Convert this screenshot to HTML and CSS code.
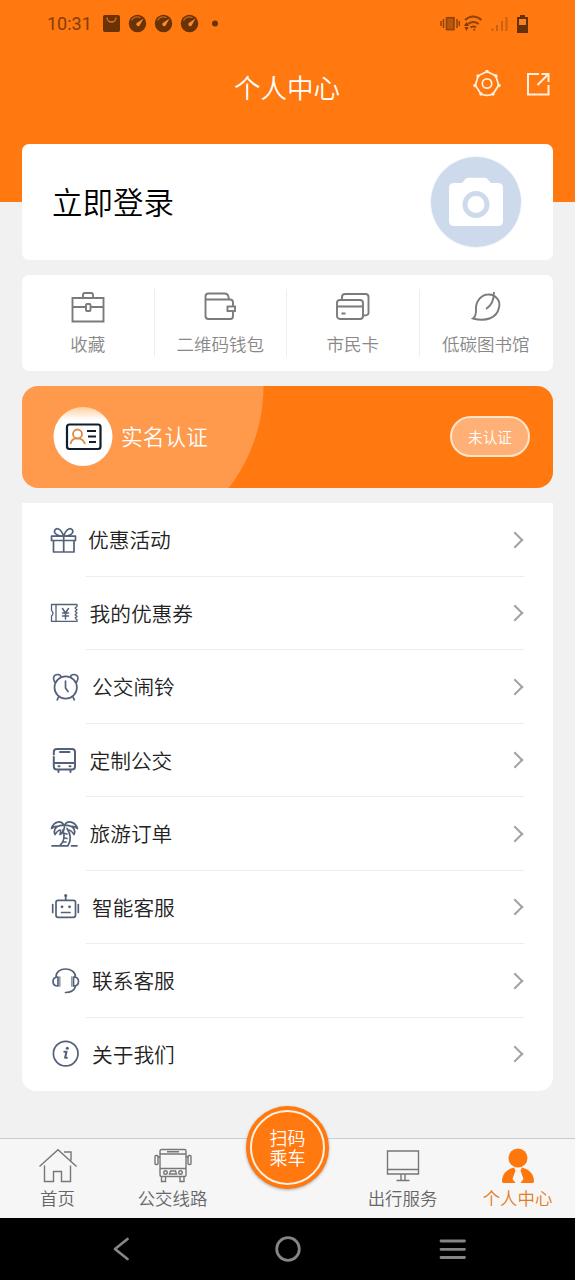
FILE: index.html
```html
<!DOCTYPE html>
<html lang="zh-CN">
<head>
<meta charset="utf-8">
<title>个人中心</title>
<link rel="stylesheet" href="styles.css">
</head>
<body>
<div class="screen">
  <header class="header">
    <div class="status">
      <span class="time">10:31</span>
      <svg class="status-apps" width="118" height="20" viewBox="0 0 118 20">
        <rect x="0" y="2" width="17" height="17" rx="2" fill="#6b3206"/>
        <path d="M4 4.500a4.500 4.500 0 0 0 9 0" fill="none" stroke="#e27420" stroke-width="1.300"/>
        <g id="gauge"><circle cx="34.500" cy="10.500" r="8.700" fill="#6b3206"/><path d="M28.500 7.500q3-5 9-3" fill="none" stroke="#c9681f" stroke-width="1.300"/><path d="M40.500 5.500l-4 7.300a2 2 0 0 1-3-2.500z" fill="#f78b38"/></g>
        <use href="#gauge" x="26"/><use href="#gauge" x="52"/>
        <circle cx="112" cy="10.500" r="3" fill="#6b3206"/>
      </svg>
      <svg class="status-system" width="90" height="22" viewBox="0 0 90 22">
        <g fill="none" stroke="#8e4308" stroke-width="1.500">
          <rect x="6.500" y="5.700" width="7.500" height="12" fill="#b8560b"/>
          <path d="M3.500 7v9M17 7v9M1 9v5M19.300 9v5"/>
          <path d="M25 8q8-7 16.500 0" stroke-width="2"/><path d="M28 12q5.300-4 10.700 0" stroke-width="2"/><path d="M30.500 15.500q3-2 5.500 0" stroke-width="1.800"/>
        </g>
        <path d="M33 17l1.200 2 1.300-2zM24 14l2.500-4 2.500 4zM24.500 15l2 4 2-4z" fill="#7c3a07"/>
        <path d="M52.500 16.500v2.500M57 13v6M62 9v10M66.500 5v14" stroke="#c86112" stroke-width="2"/>
        <path d="M80 3h5v2h3v16H77V5h3z" fill="#66300a"/><path d="M79 7h7v6h-7z" fill="#f78325"/>
      </svg>
    </div>
    <div class="title-bar">
      <h1 class="title">个人中心</h1>
      <div class="title-actions">
        <svg width="28" height="30" viewBox="0 0 28 30" fill="none" stroke="#fff0df" stroke-width="1.700"><path d="M14 2.500l8.700 4.200 3 9.500-5.500 8.500Q14 28 7.800 24.700L2.300 16.200l3-9.500z" stroke-linejoin="round"/><circle cx="14" cy="14.500" r="4.700"/><g fill="#fff0df" stroke="none"><circle cx="14" cy="2.500" r="1.700"/><circle cx="23" cy="7" r="1.700"/><circle cx="5" cy="7" r="1.700"/><circle cx="26" cy="16.500" r="1.700"/><circle cx="2" cy="16.500" r="1.700"/><circle cx="20" cy="25" r="1.700"/><circle cx="8" cy="25" r="1.700"/></g></svg>
        <svg width="24" height="24" viewBox="0 0 24 24" fill="none" stroke="#fff0df" stroke-width="2"><path d="M13 2H2v20.500h20.500V13M15.500 2h7v8M22 2.500L11.500 13"/></svg>
      </div>
    </div>
  </header>

  <main class="content">
    <section class="card login">
      <span class="login-text">立即登录</span>
      <svg width="94" height="94" viewBox="0 0 94 94"><circle cx="47" cy="47" r="46" fill="#f3f8fe"/><circle cx="47" cy="47" r="45" fill="#cddaeb"/><path d="M25 28h8l4-4.500q1-.8 2-.8h17q1 0 2 .8l4 4.500h7q5 0 5 5v33q0 5-5 5H25q-5 0-5-5V33q0-5 5-5z" fill="#fff"/><circle cx="47" cy="49.500" r="11" fill="none" stroke="#cddaeb" stroke-width="5"/></svg>
    </section>

    <section class="card tools">
      <div class="tool"><svg width="36" height="34" viewBox="0 0 36 34"><path d="M2.500 8h31v23.500h-31zM13 7.500V5q0-2 2-2h6q2 0 2 2v2.500M2.500 17H16M20 17h13.500"/><rect x="16" y="14" width="4.500" height="7" rx="1"/></svg><span>收藏</span></div>
      <div class="tool"><svg width="36" height="34" viewBox="0 0 36 34"><path d="M3.500 9V6.500q0-3 3-3h16q3.500 0 4 3.500l.5 2M3.500 8v18q0 3 3 3h22q2.500 0 2.500-3v-4M3.500 9.500H28q3 0 3 3v4"/><rect x="25.500" y="16.500" width="7.500" height="4.500"/></svg><span>二维码钱包</span></div>
      <div class="tool"><svg width="36" height="34" viewBox="0 0 36 34"><rect x="2" y="10" width="26" height="19" rx="3"/><path d="M2 16.500h26M6.500 23.500h4M7 9V7q0-3 3-3h20.500q3 0 3 3v16q0 2.500-5 2.500"/></svg><span>市民卡</span></div>
      <div class="tool"><svg width="36" height="34" viewBox="0 0 36 34"><path d="M5 28.500q3-2 3-8C7 11 14 4.500 20 4.500c7-.5 13 6 11 13C29 28 18 32 5 28.500zM26 2q0 12-8 17"/></svg><span>低碳图书馆</span></div>
    </section>

    <section class="verify">
      <svg class="badge" width="60" height="60" viewBox="0 0 60 60"><defs><linearGradient id="rim" x1="0" y1="0" x2="0" y2="1"><stop offset="0" stop-color="#ffcf9c"/><stop offset=".22" stop-color="#fff"/></linearGradient></defs><circle cx="30" cy="29.500" r="29.500" fill="url(#rim)"/><rect x="14" y="17.500" width="33.500" height="24.500" rx="2.500" fill="none" stroke="#121d29" stroke-width="2.200"/><g fill="none" stroke="#df8840" stroke-width="1.800"><circle cx="24.500" cy="27" r="4.500"/><path d="M17.500 37q1-6 7-5.700 5.500 0 7.500 5.700"/></g><path d="M34 24h9M35 29.500h8M36 35h7" stroke="#121d29" stroke-width="2"/></svg>
      <span class="verify-text">实名认证</span>
      <span class="verify-state">未认证</span>
    </section>

    <ul class="menu">
      <li class="row"><svg class="icon" viewBox="0 0 30 30"><path d="M1.500 11.200h24v4.300h-24zM3.500 15.500h20.500V27H3.500zM13.700 11v16M13.500 11C8 11 4 9 4.500 6 5.500 2 11 3 13.500 11zM13.800 11c5.500 0 9.500-2 9-5-1-4-6.500-3-9 5z"/></svg><span class="label">优惠活动</span><i class="arrow"></i></li>
      <li class="row nudge-2"><svg class="icon thin" viewBox="0 0 30 30"><path d="M1.500 6.500h25.500v2l-1.800 1.500 1.800 1.700-1.800 1.700 1.800 1.600-1.800 1.700 1.800 1.800-1.800 1.500 1.800 1.700v1.700H1.500v-5.500q3-2 0-5.500zM6 6.500v17"/><path d="M12.500 10.500l3 4.500 3-4.500M12.500 15h6M12.500 18h6M15.500 15v6" stroke-width="1.500"/></svg><span class="label">我的优惠券</span><i class="arrow"></i></li>
      <li class="row nudge-5"><svg class="icon" viewBox="0 0 30 30"><circle cx="15.700" cy="15.500" r="11.200"/><path d="M15.500 9v7l2.500 3.500M4.700 10C2 6 4 2.500 7.500 2.500c2 0 3.500 1 3.500 2.700M26.700 10C29.500 6 27.500 2.500 24 2.500c-2 0-3.500 1-3.500 2.700M8.500 25l-1.300 2.800M23 25l1.300 2.800"/></svg><span class="label">公交闹铃</span><i class="arrow"></i></li>
      <li class="row nudge-2"><svg class="icon bold" viewBox="0 0 30 30"><path d="M3.800 9.500V7q0-3 3-3H22q3 0 3 3v14.500q0 3-3 3H6.800q-3 0-3-3V12M4 18h21M8.500 25v2M20.500 25v2"/><path d="M10 7h9.500" stroke-width="2"/><path d="M8.500 21.300h1M19.500 21.300h1"/></svg><span class="label">定制公交</span><i class="arrow"></i></li>
      <li class="row nudge-2"><svg class="icon" viewBox="0 0 30 30"><path d="M2 26.800h16M21.500 26.800h5.500M10 26.300q6-5 3-15.500M18 26.500q5-8-1-17M15 14.500l2 .5M15 19l2 .5M14 23h2"/><path d="M14 6.500C11.500 1 4 2 1.500 9.500q3-2.500 6-2M14 6.500Q8 5.500 5 10q-1.500 3 0 5.500 3-4.500 5.500-4.500.5 2-.5 4.500Q13.500 14 14.500 8M14.500 6.500C17 1 25 2 27.500 9.500q-3-2.500-6-2M14.500 6.500Q21 5.500 24 10q1.500 3 0 5.500-3-4.500-5.500-4.500"/></svg><span class="label">旅游订单</span><i class="arrow"></i></li>
      <li class="row nudge-4"><svg class="icon" viewBox="0 0 30 30"><rect x="6" y="8.300" width="19.500" height="17" rx="2"/><path d="M15.700 8V4M2.700 12.500v8M28.300 12.500v8M11.500 20.500h8.500"/><g fill="#536179" stroke="none"><circle cx="15.700" cy="3.500" r="1.500"/><circle cx="12" cy="14.800" r="1.400"/><circle cx="19.500" cy="14.800" r="1.400"/></g></svg><span class="label">智能客服</span><i class="arrow"></i></li>
      <li class="row nudge-4"><svg class="icon" viewBox="0 0 30 30"><path d="M6 11C6 6 10 3 15.500 3S25.500 6 25.500 11M25.500 20.500q-2 6-10 6M8 11q-5 0-5 4.500T8 20zM23.500 11q5 0 5 4.500t-5 4.500z"/><path d="M9.700 11v9M21.800 11v9" stroke="#929caa"/></svg><span class="label">联系客服</span><i class="arrow"></i></li>
      <li class="row nudge-4"><svg class="icon" viewBox="0 0 30 30"><circle cx="15.700" cy="14.600" r="12.300"/><path d="M14.300 12.700h2.200l-1.400 6.100h1.800" stroke-width="2"/><circle cx="17.300" cy="9.300" r="1.500" fill="#536179" stroke="none"/></svg><span class="label">关于我们</span><i class="arrow"></i></li>
    </ul>
  </main>

  <nav class="tabs">
    <div class="tab"><svg width="40" height="36" viewBox="0 0 40 36"><path d="M1.500 18.500L20 1.800l18.500 16.700M6.500 17.500v16h9V23.500h8v10h9v-16M26 4h7v8.500"/></svg><span>首页</span></div>
    <div class="tab"><svg width="40" height="36" viewBox="0 0 40 36"><rect x="7" y="1.500" width="26" height="27" rx="1.500"/><path d="M7 6h26M7 20.500h26M14 3.800h12M8.500 28.500v5h4v-5M27 28.500v5h4v-5M7 9H4.500M33 9h2.500"/><rect x="2" y="7.500" width="3" height="9" rx="1"/><rect x="35" y="7.500" width="3" height="9" rx="1"/><circle cx="12.500" cy="24.500" r="1.800"/><circle cx="27.500" cy="24.500" r="1.800"/><path d="M17.500 23h5l1 3h-7z"/></svg><span>公交线路</span></div>
    <div class="tab scan-tab"><div class="scan"><div class="scan-ring"><span>扫码</span><span>乘车</span></div></div></div>
    <div class="tab"><svg width="40" height="36" viewBox="0 0 40 36"><path d="M4.500 3h31v23h-31zM4.500 21.500h31M18 26v6M22 26v6M13.500 32.500h13"/></svg><span>出行服务</span></div>
    <div class="tab active"><svg width="40" height="36" viewBox="0 0 40 36"><g fill="#fe770d" stroke="none"><circle cx="20" cy="10" r="9.500"/><path d="M4 33.500c0-7 4-12 12-14l1.500 3-3 8.500 3 4H6q-2 0-2-1.500zM36 33.500c0-7-4-12-12-14l-1.500 3 3 8.500-3 4H34q2 0 2-1.500z"/></g></svg><span>个人中心</span></div>
  </nav>

  <footer class="system-nav">
    <svg width="20" height="26" viewBox="0 0 20 26"><path d="M16.500 3L4 13l12.500 10"/></svg>
    <svg class="nav-home" width="28" height="28" viewBox="0 0 28 28"><circle cx="14" cy="14" r="11.300"/></svg>
    <svg width="28" height="24" viewBox="0 0 28 24"><path d="M2 4h23.500M2 12.300h23.500M2 20.500h23.500"/></svg>
  </footer>
</div>
</body>
</html>
```

FILE: styles.css
```css
* { box-sizing: border-box; }
body { margin: 0; font-family: "Noto Sans CJK SC DemiLight", "Noto Sans CJK SC", sans-serif; font-weight: 350; }
.screen { width: 575px; height: 1280px; display: flex; flex-direction: column; background: #f1f1f1; overflow: hidden; }
svg { display: block; flex: none; }

.header { height: 202px; background: #ff7810; flex: none; }
.status { height: 48px; padding: 0 45px 0 47px; display: flex; align-items: center; }
.time { width: 56px; font: 400 18px/20px Roboto, sans-serif; color: #843e08; }
.status-apps { margin-bottom: 2px; }
.status-system { margin: 0 0 3px auto; }
.title-bar { height: 78px; display: grid; grid-template-columns: 1fr auto 1fr; align-items: center; padding: 0 25px 0 24px; }
.title { grid-column: 2; margin: 0; font-size: 26.500px; font-weight: 350; line-height: 40px; color: #fff; }
.title-actions { display: flex; justify-content: flex-end; align-items: center; gap: 25px; margin-bottom: 7px; }

.content { margin: -58px 22px 0; display: flex; flex-direction: column; gap: 15px; flex: none; }
.card { background: #fff; border-radius: 7px; }
.login { height: 116px; display: flex; align-items: center; justify-content: space-between; padding: 0 30px; }
.login-text { font-size: 30.500px; line-height: 44px; margin-bottom: 2px; color: #000; }

.tools { height: 96px; display: grid; grid-template-columns: repeat(4, 1fr); padding: 14px 1px 14px 0; }
.tool { display: flex; flex-direction: column; align-items: center; border-right: 1px solid #eee; }
.tool:last-child { border-right: 0; }
.tool svg { fill: none; stroke: #7b7b7b; stroke-width: 1.900; margin-top: 1px; }
.tool span { font-size: 17.500px; line-height: 26px; margin-top: 7px; color: #888; }

.verify { height: 102px; border-radius: 16px; display: flex; align-items: center; padding: 0 23px 0 31px; background: radial-gradient(circle at 75px 0, #ff994c 166px, #ff7810 167px); }
.verify-text { margin: 0 0 2px 8px; font-size: 21.700px; line-height: 32px; color: #fff; }
.verify-state { margin: 0 0 1px auto; width: 80px; height: 41px; border: 2px solid #ffe5c8; border-radius: 21px; background: #ffb077; color: #fff; font-size: 14.700px; line-height: 37px; text-align: center; }

.menu { list-style: none; margin: 0; padding: 0 29px 0 28px; background: #fff; border-radius: 0 0 14px 14px; }
.row { height: 73.500px; display: flex; align-items: center; background: linear-gradient(#ededed, #ededed) 36px 100% / 100% 1px no-repeat; }
.row:last-child { background: none; }
.icon { width: 30px; height: 30px; fill: none; stroke: #536179; stroke-width: 1.700; stroke-linecap: round; stroke-linejoin: round; }
.icon.thin { stroke-width: 1.300; }
.icon.bold { stroke-width: 2; }
.label { margin: 0 0 1px 8px; font-size: 20.700px; line-height: 30px; color: #222; }
.nudge-2 .label { margin-left: 9.500px; }
.nudge-4 .label { margin-left: 12px; }
.nudge-5 .label { margin-left: 12px; }
.arrow { width: 12px; height: 12px; border: solid #a3a3a3; border-width: 2px 2px 0 0; margin: 0 3px 0 auto; transform: rotate(45deg); }

.tabs { height: 80px; margin-top: auto; flex: none; display: grid; grid-template-columns: repeat(5, 1fr); background: #f6f6f6; border-top: 1px solid #ccc; }
.tab { display: flex; flex-direction: column; align-items: center; padding-top: 9px; font-size: 17.400px; line-height: 26px; color: #666; }
.tab svg { fill: none; stroke: #777; stroke-width: 1.400; }
.tab > span { margin-top: 1px; }
.tab.active { color: #e57b20; }
.scan-tab { padding: 0; }
.scan { width: 83px; height: 83px; margin-top: -33px; border-radius: 50%; padding: 4px; background: #ff7810; box-shadow: 0 1px 3px #aaa; }
.scan-ring { height: 75px; border: 2px solid #fff0df; border-radius: 50%; display: flex; flex-direction: column; align-items: center; justify-content: center; padding-bottom: 2px; font-size: 18px; line-height: 20px; color: #fff; }

.system-nav { height: 62px; background: #000; flex: none; display: flex; align-items: center; justify-content: space-between; padding: 0 108px 0 111px; }
.system-nav svg { fill: none; stroke: #858585; stroke-width: 2.800; stroke-linecap: round; stroke-linejoin: round; }
.system-nav .nav-home { margin-left: 5px; }
```
